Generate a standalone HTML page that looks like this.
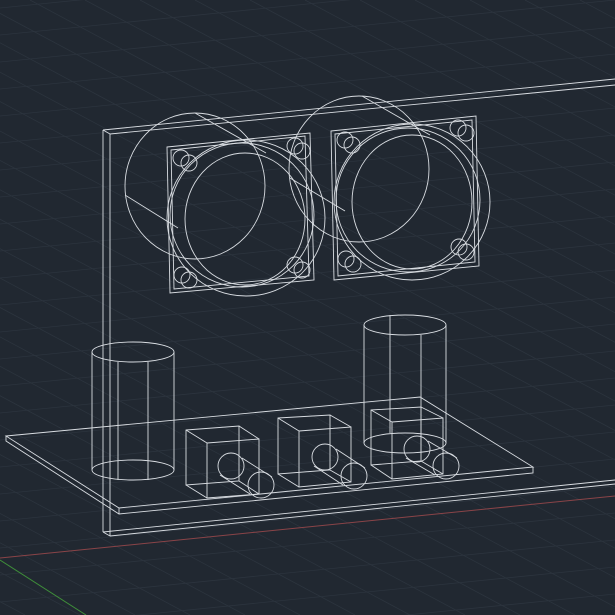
<!DOCTYPE html>
<html><head><meta charset="utf-8">
<style>
html,body{margin:0;padding:0;background:#212831;width:615px;height:615px;overflow:hidden;position:relative}
svg{display:block;position:absolute;left:0;top:0}
</style></head>
<body>
<svg id="s" width="615" height="615" viewBox="0 0 615 615" xmlns="http://www.w3.org/2000/svg">
<rect width="615" height="615" fill="#212831"/>
<g id="grid" stroke="#2c343e" stroke-width="0.8"></g>
<line x1="0" y1="558" x2="615" y2="496" stroke="#8a4448" stroke-width="1"/>
<line x1="0" y1="560" x2="86" y2="615" stroke="#3f8f3a" stroke-width="1"/>
<g fill="none" stroke="#d9dde2" stroke-width="0.9">
<polyline points="103,130 615,79"/>
<polyline points="110,134 615,85"/>
<line x1="103" y1="130" x2="110" y2="134"/>
<line x1="103" y1="130" x2="103" y2="532"/>
<line x1="110" y1="134" x2="110" y2="536"/>
<line x1="103" y1="532" x2="110" y2="536"/>
<line x1="110" y1="536" x2="615" y2="484"/>
<line x1="103" y1="532" x2="615" y2="480"/>
<polygon points="6,436 420,397 533,467 119,508"/>
<polyline points="6,436 6,441 119,514 533,473 533,467"/>
<line x1="119" y1="508" x2="119" y2="514"/>
<ellipse cx="195" cy="186" rx="70" ry="73"/>
<line x1="195" y1="113" x2="266" y2="153"/>
<line x1="125" y1="195" x2="178" y2="228"/>
<polygon points="167,147 310,133 314,280 170,293"/>
<polygon points="171,150 305,136 309,276 174,289"/>
<ellipse cx="246" cy="218" rx="79" ry="78"/>
<ellipse cx="242" cy="215" rx="72" ry="72"/>
<ellipse cx="245" cy="219" rx="60" ry="66"/>
<circle cx="181" cy="158" r="8"/><circle cx="189" cy="163" r="8"/>
<circle cx="295" cy="146" r="8"/><circle cx="302" cy="151" r="8"/>
<circle cx="182" cy="275" r="8"/><circle cx="189" cy="280" r="8"/>
<circle cx="295" cy="265" r="8"/><circle cx="302" cy="270" r="8"/>
<ellipse cx="359" cy="169" rx="70" ry="73"/>
<line x1="362" y1="96" x2="430" y2="135"/>
<line x1="290" y1="178" x2="345" y2="211"/>
<polygon points="331,131 476,116 479,266 334,280"/>
<polygon points="335,134 472,120 475,262 338,276"/>
<ellipse cx="412" cy="202" rx="78" ry="78"/>
<ellipse cx="408" cy="200" rx="72" ry="72"/>
<ellipse cx="412" cy="202" rx="60" ry="67"/>
<circle cx="345" cy="140" r="8"/><circle cx="352" cy="145" r="8"/>
<circle cx="458" cy="128" r="8"/><circle cx="466" cy="133" r="8"/>
<circle cx="346" cy="259" r="8"/><circle cx="353" cy="264" r="8"/>
<circle cx="459" cy="247" r="8"/><circle cx="466" cy="252" r="8"/>
<ellipse cx="133" cy="352" rx="41" ry="10"/>
<ellipse cx="133" cy="470" rx="41" ry="10"/>
<line x1="92" y1="352" x2="92" y2="470"/><line x1="174" y1="352" x2="174" y2="470"/>
<line x1="118" y1="362" x2="118" y2="480"/><line x1="148" y1="362" x2="148" y2="480"/>
<ellipse cx="405" cy="325" rx="41" ry="10"/>
<ellipse cx="405" cy="443" rx="41" ry="10"/>
<line x1="364" y1="325" x2="364" y2="443"/><line x1="446" y1="325" x2="446" y2="443"/>
<line x1="390" y1="315" x2="390" y2="433"/><line x1="421" y1="335" x2="421" y2="453"/>
<polygon points="186,430 239,426 239,481 186,485"/>
<polygon points="207,443 259,439 259,494 207,498"/>
<line x1="186" y1="430" x2="207" y2="443"/><line x1="239" y1="426" x2="259" y2="439"/>
<line x1="186" y1="485" x2="207" y2="498"/><line x1="239" y1="481" x2="259" y2="494"/>
<circle cx="231" cy="466" r="13"/><circle cx="261" cy="485" r="13"/>
<line x1="220" y1="475" x2="250" y2="494"/><line x1="242" y1="458" x2="272" y2="477"/>
<polygon points="278,418 330,415 330,470 278,474"/>
<polygon points="299,431 351,427 351,482 299,487"/>
<line x1="278" y1="418" x2="299" y2="431"/><line x1="330" y1="415" x2="351" y2="427"/>
<line x1="278" y1="474" x2="299" y2="487"/><line x1="330" y1="470" x2="351" y2="482"/>
<circle cx="325" cy="457" r="13"/><circle cx="354" cy="476" r="13"/>
<line x1="314" y1="466" x2="343" y2="485"/><line x1="336" y1="449" x2="365" y2="468"/>
<polygon points="371,410 421,407 421,461 371,465"/>
<polygon points="392,422 443,418 443,474 392,479"/>
<line x1="371" y1="410" x2="392" y2="422"/><line x1="421" y1="407" x2="443" y2="418"/>
<line x1="371" y1="465" x2="392" y2="479"/><line x1="421" y1="461" x2="443" y2="474"/>
<circle cx="417" cy="449" r="13"/><circle cx="446" cy="466" r="13"/>
<line x1="406" y1="458" x2="435" y2="475"/><line x1="428" y1="441" x2="457" y2="458"/>
</g>
</svg>
<script>
var g=document.getElementById('grid'),ns='http://www.w3.org/2000/svg';
function L(a,b,c,d){var l=document.createElementNS(ns,'line');l.setAttribute('x1',a);l.setAttribute('y1',b);l.setAttribute('x2',c);l.setAttribute('y2',d);g.appendChild(l);}
for(var y=-100;y<800;y+=27){L(0,y,615,y-62);}
for(var x=-1400;x<700;x+=55){L(x,0,x+1150,615);}
</script>
</body></html>
